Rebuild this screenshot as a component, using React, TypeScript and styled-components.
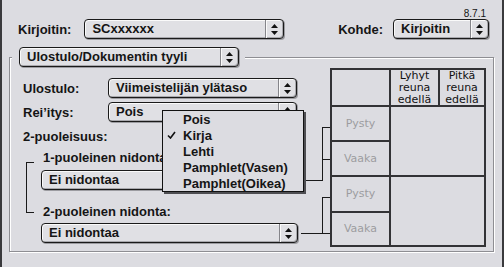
import styled, { createGlobalStyle } from 'styled-components';

const GlobalStyle = createGlobalStyle`
    html, body {
        margin: 0;
        padding: 0;
        background: #dcdce1;
    }
    body {
        font-family: "Liberation Sans", Arial, sans-serif;
    }
`;

const Window = styled.div`
    width: 504px;
    height: 267px;
    box-sizing: border-box;
    background: #dcdce1;
    border-left: 2px solid #3a3a3d;
    border-right: 2px solid #3a3a3d;
    padding-top: 8px;
    overflow: hidden;
    font-family: "Liberation Sans", Arial, sans-serif;
    color: #151515;
`;

const Version = styled.div`
    height: 11px;
    line-height: 11px;
    font-size: 10px;
    text-align: right;
    padding-right: 16px;
`;

const TopRow = styled.div`
    display: flex;
    justify-content: space-between;
    align-items: center;
    height: 20px;
    padding: 0 13px 0 16px;
`;

const Field = styled.div<{ $gap: number }>`
    display: flex;
    align-items: center;
    gap: ${props => props.$gap}px;
`;

const Label = styled.span<{ $width?: number }>`
    font-size: 13px;
    font-weight: bold;
    white-space: nowrap;
    flex-shrink: 0;
    width: ${props => props.$width ? `${props.$width}px` : 'auto'};
`;

const PopupBox = styled.div<{ $width: number }>`
    display: flex;
    flex-shrink: 0;
    width: ${props => props.$width}px;
    height: 20px;
    box-sizing: border-box;
    border: 1px solid #1a1a1a;
    border-radius: 4px;
    background: #e0e0e4;
    box-shadow: inset 1px 1px 0 #fafafa, inset -1px -1px 0 #a9a9ae, 1px 1px 0 #9c9ca1;
`;

const PopupText = styled.span`
    flex: 1;
    padding-left: 7px;
    font-size: 13px;
    font-weight: bold;
    line-height: 18px;
    white-space: nowrap;
    overflow: hidden;
`;

const PopupArrow = styled.span`
    width: 17px;
    display: flex;
    align-items: center;
    justify-content: center;
    border-left: 1px solid #85858a;
    box-shadow: inset 1px 0 0 #fafafa;
`;

const GroupSection = styled.div`
    margin: 8px 8px 0 7px;
`;

const GroupTitle = styled.div`
    position: relative;
    z-index: 1;
    display: flex;
    width: fit-content;
    margin-left: 3px;
    padding: 0 6px 0 7px;
    background: #dcdce1;
`;

const GroupBox = styled.div`
    display: flex;
    align-items: flex-start;
    margin-top: -10px;
    padding: 10px 7px 4px 13px;
    border: 1px solid #8e8e93;
    box-shadow: inset 1px 1px 0 #fff, 1px 1px 0 #fff;
`;

const LeftColumn = styled.div`
    width: 274px;
    flex-shrink: 0;
    padding-top: 10px;
    display: flex;
    flex-direction: column;
`;

const FormRow = styled.div`
    position: relative;
    display: flex;
    align-items: center;
    & + & {
        margin-top: 4px;
    }
`;

const SectionLabel = styled(Label)`
    display: block;
    line-height: 16px;
    margin-top: 7px;
`;

const Binding = styled.div`
    display: flex;
    margin-top: 5px;
`;

const Bracket = styled.div`
    width: 7px;
    height: 49px;
    margin: 12px 0 0 3px;
    border: 1px solid #1a1a1a;
    border-right: none;
    flex-shrink: 0;
`;

const BindingBody = styled.div`
    margin-left: 7px;
    display: flex;
    flex-direction: column;
`;

const SubLabel = styled(Label)<{ $top: number }>`
    display: block;
    line-height: 16px;
    padding-left: 2px;
    margin-top: ${props => props.$top}px;
`;

const Spaced = styled.div<{ $top: number }>`
    margin-top: ${props => props.$top}px;
`;

const Menu = styled.ul`
    position: absolute;
    left: 139px;
    top: 8px;
    z-index: 5;
    width: 142px;
    margin: 0;
    padding: 0;
    list-style: none;
    box-sizing: border-box;
    background: #dcdce1;
    border: 1px solid #111;
    box-shadow: 2px 2px 0 #4e4e52;
`;

const MenuItem = styled.li`
    display: flex;
    align-items: center;
    height: 16px;
    padding-left: 4px;
    font-size: 13px;
    font-weight: bold;
    white-space: nowrap;
`;

const Check = styled.span`
    width: 16px;
    display: inline-flex;
    align-items: center;
`;

const Connector = styled.svg`
    display: block;
    flex-shrink: 0;
`;

const Table = styled.div`
    display: grid;
    grid-template-columns: 57px 47px 44px;
    grid-template-rows: 35px 33px 33px 34px 32px;
    gap: 2px;
    padding: 2px;
    background: #333336;
    flex-shrink: 0;
`;

const Cell = styled.div<{ $muted?: boolean; $col?: string; $row?: string }>`
    background: #dcdce1;
    display: flex;
    align-items: center;
    justify-content: center;
    text-align: center;
    font-family: "DejaVu Sans", Verdana, sans-serif;
    font-size: 11px;
    line-height: 12px;
    color: ${props => props.$muted ? '#9c9ca0' : '#111'};
    grid-column: ${props => props.$col ?? 'auto'};
    grid-row: ${props => props.$row ?? 'auto'};
`;

const Arrows = () => (
    <svg width="7" height="11" viewBox="0 0 7 11">
        <path d="M3.5 0L7 4H0Z M0 7H7L3.5 11Z" fill="#111" />
    </svg>
);

const Popup = ({ value, width }: { value: string, width: number }) => (
    <PopupBox $width={width}>
        <PopupText>{value}</PopupText>
        <PopupArrow><Arrows /></PopupArrow>
    </PopupBox>
);

const menuItems = ['Pois', 'Kirja', 'Lehti', 'Pamphlet(Vasen)', 'Pamphlet(Oikea)'];

export default function App() {
    return (
        <Window>
            <GlobalStyle />
            <Version>8.7.1</Version>
            <TopRow>
                <Field $gap={13}>
                    <Label>Kirjoitin:</Label>
                    <Popup value="SCxxxxxx" width={200} />
                </Field>
                <Field $gap={10}>
                    <Label>Kohde:</Label>
                    <Popup value="Kirjoitin" width={96} />
                </Field>
            </TopRow>
            <GroupSection>
                <GroupTitle>
                    <Popup value="Ulostulo/Dokumentin tyyli" width={220} />
                </GroupTitle>
                <GroupBox>
                    <LeftColumn>
                        <FormRow>
                            <Label $width={85}>Ulostulo:</Label>
                            <Popup value="Viimeistelijän ylätaso" width={189} />
                        </FormRow>
                        <FormRow>
                            <Label $width={85}>Rei’itys:</Label>
                            <Popup value="Pois" width={189} />
                            <Menu>
                                {menuItems.map(item => (
                                    <MenuItem key={item}>
                                        <Check>
                                            {item === 'Kirja' && (
                                                <svg width="9" height="8" viewBox="0 0 9 8">
                                                    <path d="M1 4.5L3.5 7L8 1" fill="none" stroke="#111" strokeWidth="1.6" />
                                                </svg>
                                            )}
                                        </Check>
                                        {item}
                                    </MenuItem>
                                ))}
                            </Menu>
                        </FormRow>
                        <SectionLabel>2-puoleisuus:</SectionLabel>
                        <Binding>
                            <Bracket />
                            <BindingBody>
                                <SubLabel $top={0}>1-puoleinen nidonta:</SubLabel>
                                <Spaced $top={4}><Popup value="Ei nidontaa" width={257} /></Spaced>
                                <SubLabel $top={14}>2-puoleinen nidonta:</SubLabel>
                                <Spaced $top={3}><Popup value="Ei nidontaa" width={257} /></Spaced>
                            </BindingBody>
                        </Binding>
                    </LeftColumn>
                    <Connector width="33" height="179" viewBox="0 0 33 179" shapeRendering="crispEdges">
                        <path
                            d="M4 112.5H25.5 M25.5 59V113 M25 59.5H33 M25 91.5H33 M25.5 129V166 M25 129.5H33 M4 165.5H33"
                            stroke="#1a1a1a"
                            strokeWidth="1"
                            fill="none"
                        />
                    </Connector>
                    <Table>
                        <Cell />
                        <Cell>Lyhyt<br />reuna<br />edellä</Cell>
                        <Cell>Pitkä<br />reuna<br />edellä</Cell>
                        <Cell $muted>Pysty</Cell>
                        <Cell $col="2 / 4" $row="2 / 4" />
                        <Cell $muted>Vaaka</Cell>
                        <Cell $muted>Pysty</Cell>
                        <Cell $col="2 / 4" $row="4 / 6" />
                        <Cell $muted>Vaaka</Cell>
                    </Table>
                </GroupBox>
            </GroupSection>
        </Window>
    );
}
